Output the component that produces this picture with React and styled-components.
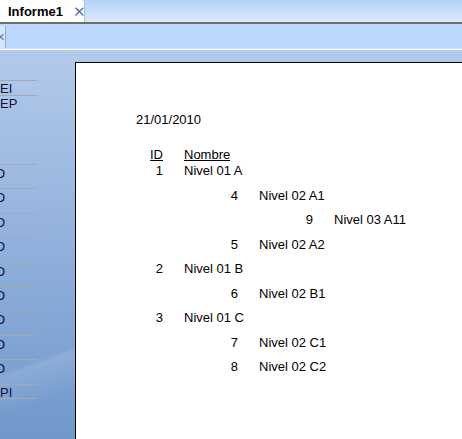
import React from 'react';
import styled, { createGlobalStyle } from 'styled-components';

const GlobalStyle = createGlobalStyle`
  html, body {
    margin: 0;
    padding: 0;
    overflow: hidden;
  }
  body {
    font-family: "Liberation Sans", Arial, sans-serif;
  }
`;

const Window = styled.div`
  width: 462px;
  height: 439px;
  display: flex;
  flex-direction: column;
  overflow: hidden;
  background: #bcd8fc;
`;

const TabStrip = styled.div`
  height: 22px;
  display: flex;
  align-items: flex-end;
  background: linear-gradient(to bottom, #b6d2f8, #dbe8fb);
  border-bottom: 2px solid #6e6e6e;
`;

const Tab = styled.div`
  height: 22px;
  width: 85px;
  box-sizing: border-box;
  display: flex;
  align-items: center;
  gap: 10px;
  padding-left: 8px;
  background: #fff;
  border-right: 1px solid #a9bcd6;
  border-top-right-radius: 3px;
  font-weight: bold;
  font-size: 13px;
  color: #000;
`;

const Close = styled.span`
  font-size: 15px;
  font-weight: normal;
  color: #5877ac;
  line-height: 1;
`;

const Toolbar = styled.div`
  height: 24px;
  display: flex;
  background: #bcd8fc;
  border-bottom: 1px solid #d2e2f7;
`;

const MiniTab = styled.div`
  width: 6px;
  margin-top: 2px;
  box-sizing: border-box;
  background: #d8e7fb;
  border-right: 1px solid #8faad0;
  border-bottom-right-radius: 2px;
  overflow: hidden;
  display: flex;
  align-items: center;
  justify-content: flex-end;
  font-size: 11px;
  color: #5877ac;
`;

const Workspace = styled.div`
  flex: 1;
  display: flex;
  border-top: 1px solid #ffffff;
  background:
    linear-gradient(160deg, transparent 58%, rgba(255, 255, 255, 0.12) 59%, transparent 66%),
    linear-gradient(to bottom, #b3cbeb 0%, #95b3dd 45%, #7098cb 100%);
`;

const Sidebar = styled.div`
  width: 37px;
  padding-top: 30px;
  display: flex;
  flex-direction: column;
  overflow: hidden;
`;

const SideItem = styled.div`
  box-sizing: border-box;
  height: ${({ $tall }) => ($tall ? '24.4px' : '15px')};
  line-height: ${({ $tall }) => ($tall ? '18px' : '15px')};
  border-top: 1px solid #a3a9b4;
  border-bottom: ${({ $closed }) => ($closed ? '1px solid #a3a9b4' : 'none')};
  font-size: 13px;
  color: #10123a;
  white-space: nowrap;
  text-indent: ${({ $cut }) => ($cut ? '-5px' : '0')};
`;

const SideGap = styled.div`
  height: 54px;
`;

const Page = styled.div`
  flex: 1;
  margin-left: 38px;
  margin-top: 12px;
  background: #fff;
  border-top: 1px solid #000;
  border-left: 1px solid #000;
  padding-top: 49px;
  font-size: 13px;
  color: #000;
`;

const DateLine = styled.div`
  line-height: 15px;
  padding-left: 60px;
  margin-bottom: 20px;
`;

const Row = styled.div`
  display: flex;
  height: ${({ $header }) => ($header ? '16px' : '24.5px')};
  line-height: 15px;
  padding-left: ${({ $level }) => 56 + ($level - 1) * 75}px;
`;

const IdCell = styled.span`
  width: 31px;
  text-align: right;
  text-decoration: ${({ $header }) => ($header ? 'underline' : 'none')};
`;

const NameCell = styled.span`
  margin-left: 21px;
  text-decoration: ${({ $header }) => ($header ? 'underline' : 'none')};
`;

const rows = [
  { id: 1, name: 'Nivel 01 A', level: 1 },
  { id: 4, name: 'Nivel 02 A1', level: 2 },
  { id: 9, name: 'Nivel 03 A11', level: 3 },
  { id: 5, name: 'Nivel 02 A2', level: 2 },
  { id: 2, name: 'Nivel 01 B', level: 1 },
  { id: 6, name: 'Nivel 02 B1', level: 2 },
  { id: 3, name: 'Nivel 01 C', level: 1 },
  { id: 7, name: 'Nivel 02 C1', level: 2 },
  { id: 8, name: 'Nivel 02 C2', level: 2 },
];

export default function App() {
  return (
    <>
      <GlobalStyle />
      <Window>
        <TabStrip>
          <Tab>
            Informe1 <Close>✕</Close>
          </Tab>
        </TabStrip>
        <Toolbar>
          <MiniTab>✕</MiniTab>
        </Toolbar>
        <Workspace>
          <Sidebar>
            <SideItem>EI</SideItem>
            <SideItem>EP</SideItem>
            <SideGap />
            {Array.from({ length: 9 }).map((_, i) => (
              <SideItem key={i} $tall $cut>
                O
              </SideItem>
            ))}
            <SideItem $closed>PI</SideItem>
          </Sidebar>
          <Page>
            <DateLine>21/01/2010</DateLine>
            <Row $header $level={1}>
              <IdCell $header>ID</IdCell>
              <NameCell $header>Nombre</NameCell>
            </Row>
            {rows.map((r) => (
              <Row key={r.id} $level={r.level}>
                <IdCell>{r.id}</IdCell>
                <NameCell>{r.name}</NameCell>
              </Row>
            ))}
          </Page>
        </Workspace>
      </Window>
    </>
  );
}
